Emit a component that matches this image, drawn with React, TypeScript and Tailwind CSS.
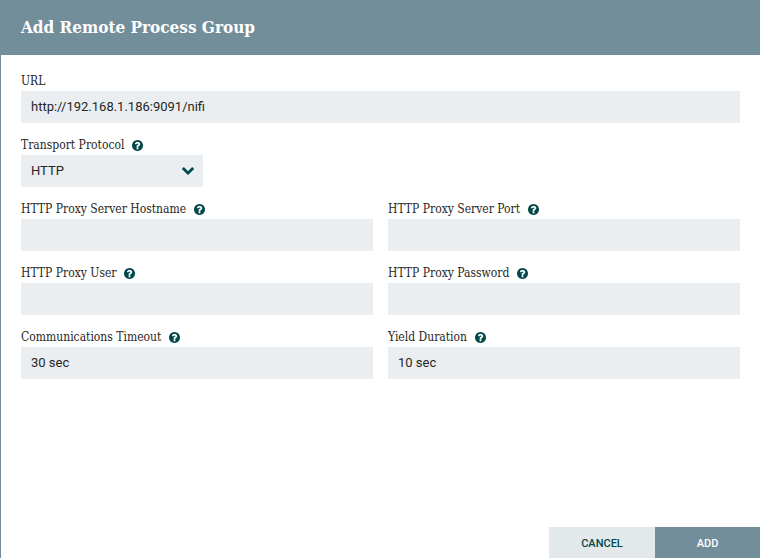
import { useState } from 'react';
import type { ReactNode } from 'react';

const labelClass = "font-['Roboto_Slab','DejaVu_Serif_Condensed','DejaVu_Serif',serif] text-xs leading-4 text-[#262626]";
const fieldClass = 'block h-8 w-full rounded-none bg-[#eaeef0] px-2.5 text-[13px] text-[#262626] outline-none';

function QuestionIcon() {
  return (
    <svg viewBox="128 128 1536 1536" className="h-[11px] w-[11px] flex-shrink-0 fill-[#004849]" aria-hidden="true">
      <path d="M1024 1376v-192q0-14-9-23t-23-9h-192q-14 0-23 9t-9 23v192q0 14 9 23t23 9h192q14 0 23-9t9-23zm256-672q0-88-55.5-163t-138.5-116-170-41q-243 0-371 213-15 24 8 42l132 100q7 6 19 6 16 0 25-12 53-68 86-92 34-24 86-24 48 0 85.5 26t37.5 59q0 38-20 61t-68 45q-63 28-115.5 86.5t-52.5 125.5v36q0 14 9 23t23 9h192q14 0 23-9t9-23q0-19 21.5-49.5t54.5-49.5q32-18 49-28.5t46-35 44.5-48 28-60.5 12.5-81zm384 192q0 209-103 385.5t-279.5 279.5-385.5 103-385.5-103-279.5-279.5-103-385.5 103-385.5 279.5-279.5 385.5-103 385.5 103 279.5 279.5 103 385.5z" />
    </svg>
  );
}

function ChevronIcon() {
  return (
    <svg
      viewBox="90 533 1612 1035"
      className="pointer-events-none absolute top-3 right-[9px] h-2 w-3 fill-[#004849]"
      aria-hidden="true"
    >
      <path d="M1683 808l-742 741q-19 19-45 19t-45-19l-742-741q-19-19-19-45.5t19-45.5l166-165q19-19 45-19t45 19l531 531 531-531q19-19 45-19t45 19l166 165q19 19 19 45.5t-19 45.5z" />
    </svg>
  );
}

interface SettingProps {
  id: string;
  label: string;
  help?: boolean;
  children: ReactNode;
}

function Setting({ id, label, help = true, children }: SettingProps) {
  return (
    <div>
      <div className="mb-0.5 flex items-center gap-2">
        <label htmlFor={id} className={labelClass}>{label}</label>
        {help && <QuestionIcon />}
      </div>
      {children}
    </div>
  );
}

const settings = [
  { id: 'proxy-host', label: 'HTTP Proxy Server Hostname', type: 'text', value: '' },
  { id: 'proxy-port', label: 'HTTP Proxy Server Port', type: 'text', value: '' },
  { id: 'proxy-user', label: 'HTTP Proxy User', type: 'text', value: '' },
  { id: 'proxy-password', label: 'HTTP Proxy Password', type: 'password', value: '' },
  { id: 'timeout', label: 'Communications Timeout', type: 'text', value: '30 sec' },
  { id: 'yield-duration', label: 'Yield Duration', type: 'text', value: '10 sec' },
];

export default function App() {
  const [protocol, setProtocol] = useState('HTTP');

  return (
    <form
      onSubmit={e => e.preventDefault()}
      className="flex min-h-screen flex-col border-l border-[#728e9b] bg-white font-[Roboto,sans-serif]"
    >
      <header className="flex h-[55px] items-center bg-[#728e9b] px-5">
        <h1 className="font-['Roboto_Slab','DejaVu_Serif_Condensed','DejaVu_Serif',serif] text-[17px] font-bold text-white">
          Add Remote Process Group
        </h1>
      </header>

      <div className="flex flex-1 flex-col gap-[14px] px-5 pt-[18px]">
        <Setting id="url" label="URL" help={false}>
          <input id="url" type="text" defaultValue="http://192.168.1.186:9091/nifi" className={`${fieldClass} pb-0.5`} />
        </Setting>
        <Setting id="protocol" label="Transport Protocol">
          <div className="relative w-[182px]">
            <select
              id="protocol"
              value={protocol}
              onChange={e => setProtocol(e.target.value)}
              className={`${fieldClass} appearance-none`}
            >
              <option>HTTP</option>
              <option>RAW</option>
            </select>
            <ChevronIcon />
          </div>
        </Setting>
        <div className="grid grid-cols-2 gap-x-[15px] gap-y-[14px]">
          {settings.map(s => (
            <Setting key={s.id} id={s.id} label={s.label}>
              <input id={s.id} type={s.type} defaultValue={s.value} className={`${fieldClass} pb-0.5`} />
            </Setting>
          ))}
        </div>
      </div>

      <footer className="flex justify-end">
        <button type="button" className="h-[31px] w-[106px] bg-[#e3e8eb] pt-1 text-[11px] font-medium text-[#004849]">
          CANCEL
        </button>
        <button type="submit" className="h-[31px] w-[105px] bg-[#728e9b] pt-1 text-[11px] font-medium text-white">
          ADD
        </button>
      </footer>
    </form>
  );
}
